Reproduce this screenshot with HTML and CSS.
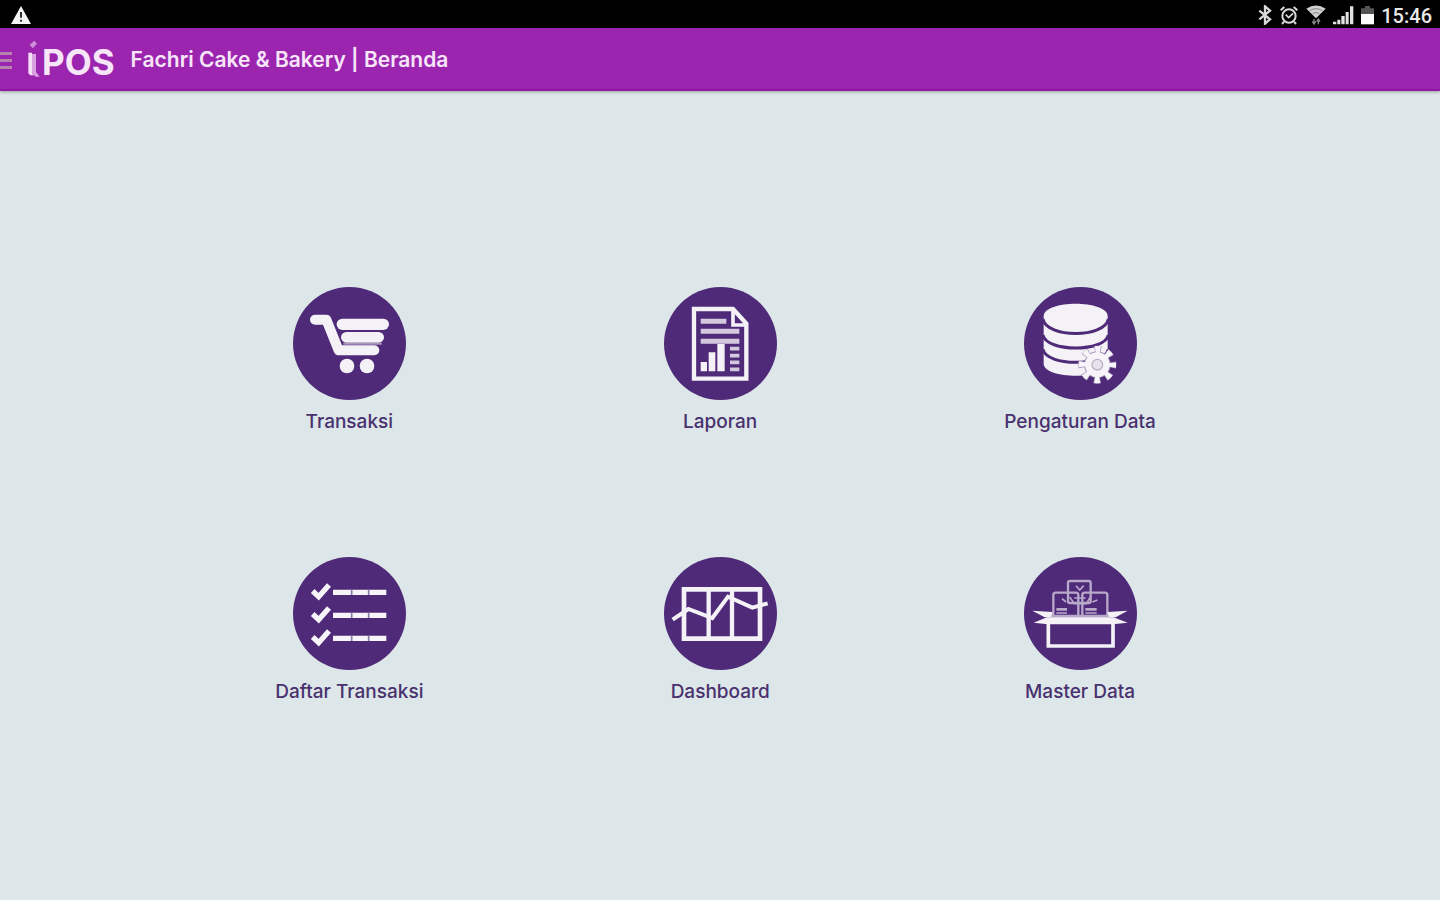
FILE: index.html
```html
<!DOCTYPE html>
<html lang="id">
<head>
    <meta charset="UTF-8">
    <meta name="viewport" content="width=device-width, initial-scale=1.0">
    <title>iPOS | Beranda</title>
    <link rel="stylesheet" href="styles.css">
</head>
<body>

    <div class="status-bar">
        <svg class="status-icon" width="20" height="18" viewBox="0 0 60 54">
            <path d="M30 0L60 54H0z" fill="#f4f4f4"/>
            <path d="M30 18v17M30 41v6" stroke="#333" stroke-width="6"/>
        </svg>
        <div class="status-right">
            <svg class="status-icon" width="14" height="20" viewBox="0 0 42 60">
                <path d="M4 17L36 43L21 56V4L36 17L4 43" fill="none" stroke="#d8d8d8" stroke-width="7"/>
            </svg>
            <svg class="status-icon" width="20" height="20" viewBox="0 0 60 60">
                <g fill="none" stroke="#d8d8d8" stroke-width="6">
                    <circle cx="30" cy="33" r="20"/>
                    <path d="M5 16L16 6M55 16L44 6M15 50l-6 7M45 50l6 7"/>
                    <path d="M20 29l9 9l13-13" stroke-width="5"/>
                </g>
            </svg>
            <svg class="status-icon" width="20" height="20" viewBox="0 0 60 60">
                <path d="M1 11Q30-8 59 11L30 40z" fill="#d0d0d0"/>
                <path d="M11 17Q30 5 49 17M20 26Q30 18 40 26" fill="none" stroke="#888" stroke-width="3"/>
                <path d="M24 42v15M19 49l5 8l5-8M37 58V43M32 50l5-8l5 8" fill="none" stroke="#8a8a8a" stroke-width="4"/>
            </svg>
            <svg class="status-icon" width="21" height="20" viewBox="0 0 63 60">
                <path d="M0 58v-8h10v8zM13 58V44h9v14zM25 58V33h10v25zM38 58V21h9v37zM51 58V4h10v54z" fill="#e2e2e2"/>
            </svg>
            <svg class="status-icon" width="13" height="20" viewBox="0 0 39 60">
                <path d="M12 3h15v7h12v18H0V10h12z" fill="#555"/>
                <path d="M0 27h39v31H0z" fill="#fff"/>
            </svg>
            <span class="clock">15:46</span>
        </div>
    </div>

    <header class="app-bar">
        <button class="menu-btn" aria-label="Menu"><span></span><span></span><span></span></button>
        <div class="logo">
            <svg class="logo-mark" width="14" height="40" viewBox="0 0 42 120">
                <path d="M8 14L22 2L30 11L17 25z" fill="#cf8ed9"/>
                <path d="M4 38h11v62l6 6H10l-6-6z" fill="#f3dff6"/>
                <path d="M15 42h12v54l11 14H26L15 100z" fill="#d9a3e1"/>
            </svg>
            <span class="logo-text">POS</span>
        </div>
        <h1 class="title">Fachri Cake &amp; Bakery | Beranda</h1>
    </header>

    <main class="menu">
        <a class="menu-item" href="#transaksi">
            <svg class="icon" viewBox="68 20 339 339">
                <circle class="disc" cx="237.5" cy="189.5" r="169.5"/>
                <g fill="none" stroke="#f4f1f7" stroke-linecap="round" stroke-linejoin="round">
                    <path d="M134 118H168L205 210H312" stroke-width="30"/>
                    <path d="M216 132H339" stroke-width="34"/>
                    <path d="M228 171H325" stroke-width="32"/>
                </g>
                <path d="M219 190H334" stroke="#aa98bd" stroke-width="6"/>
                <circle class="solid" cx="230" cy="257" r="22"/>
                <circle class="solid" cx="290" cy="257" r="22"/>
            </svg>
            <span class="label">Transaksi</span>
        </a>

        <a class="menu-item" href="#laporan">
            <svg class="icon" viewBox="73 20 339 339">
                <circle class="disc" cx="242.5" cy="189.5" r="169.5"/>
                <path class="line" d="M163 86H280L320 130V295H163z" stroke-width="13"/>
                <path class="line" d="M280 88V134H320" stroke-width="11"/>
                <g stroke="#d3c8de" stroke-width="15">
                    <path d="M183 123H260M183 153H299M183 183H299"/>
                    <path d="M271 205H299M271 226H299M271 246H299M271 267H299" stroke-width="11"/>
                </g>
                <path class="solid" d="M183 245h19v28h-19zM207 216h20v57h-20zM233 191h22v82h-22z"/>
            </svg>
            <span class="label">Laporan</span>
        </a>

        <a class="menu-item" href="#pengaturan">
            <svg class="icon" viewBox="73 20 339 339">
                <circle class="disc" cx="242.5" cy="189.5" r="169.5"/>
                <path class="solid" d="M132 108C132 58 324 58 324 108V250C324 298 132 298 132 250z"/>
                <g fill="none" stroke="#4e2a78" stroke-width="9">
                    <path d="M130 116C140 174 316 174 326 116"/>
                    <path d="M130 164C140 216 316 216 326 164"/>
                    <path d="M130 207C140 259 316 259 326 207"/>
                </g>
                <!-- gear: soft edge first, then the teeth and ring -->
                <g fill="none" stroke="#a596b9">
                    <circle cx="293" cy="253" r="45" stroke-width="24" stroke-dasharray="19 16.34" stroke-dashoffset="9.5"/>
                    <circle cx="293" cy="253" r="28" stroke-width="24"/>
                </g>
                <g fill="none" stroke="#f7f5f9">
                    <circle cx="293" cy="253" r="45" stroke-width="22" stroke-dasharray="15 20.34" stroke-dashoffset="7.5"/>
                    <circle cx="293" cy="253" r="26" stroke-width="22"/>
                </g>
                <circle cx="293" cy="253" r="16" fill="#e6e2ea" stroke="#b9b0c4" stroke-width="4"/>
            </svg>
            <span class="label">Pengaturan Data</span>
        </a>

        <a class="menu-item" href="#daftar-transaksi">
            <svg class="icon" viewBox="66 20 339 339">
                <circle class="disc" cx="235.5" cy="189.5" r="169.5"/>
                <g fill="none" stroke="#f7f5f9" stroke-width="16">
                    <path d="M125 122l18 17l31-35M125 191l18 17l31-35M125 260l18 17l31-35"/>
                    <path d="M186 126H346M186 195H346M186 264H346"/>
                </g>
                <path d="M242 118v16M242 187v16M242 256v16M293 118v16M293 187v16M293 256v16" stroke="#8d78a8" stroke-width="5"/>
            </svg>
            <span class="label">Daftar Transaksi</span>
        </a>

        <a class="menu-item" href="#dashboard">
            <svg class="icon" viewBox="73 20 339 339">
                <circle class="disc" cx="242.5" cy="189.5" r="169.5"/>
                <path class="line" d="M133 117H361V265H133z" stroke-width="14"/>
                <path class="line" d="M207 117V265M277 117V265" stroke-width="13"/>
                <path class="line" d="M99 208L146 176L218 203L265 139L338 172L384 159" stroke-width="12"/>
            </svg>
            <span class="label">Dashboard</span>
        </a>

        <a class="menu-item" href="#master-data">
            <svg class="icon" viewBox="73 20 339 339">
                <circle class="disc" cx="242.5" cy="189.5" r="169.5"/>
                <g fill="none" stroke="#b8a8ca" stroke-width="7">
                    <rect x="205" y="92" width="68" height="66" rx="6"/>
                    <path d="M161 196V134q0-7 7-7H229q7 0 7 7V196"/>
                    <path d="M248 196V134q0-7 7-7H316q7 0 7 7V196"/>
                    <path d="M229 106l11 13l12-13M187 145l12 10M278 155l15-6M210 140l14 20h36l12-20M224 143h34" stroke-width="5"/>
                    <path d="M170 177H202M257 177H291" stroke-width="8"/>
                    <path d="M170 188H202M257 188H291" stroke-width="4"/>
                </g>
                <path class="solid" d="M98 181L158 185V201H135zM384 181L324 185V201H348z"/>
                <path d="M155 198H327" stroke="#b8a8ca" stroke-width="9"/>
                <path class="solid" d="M142 201H341L384 217L340 222H144L102 217z"/>
                <path class="line" d="M146 212V287H340V212z" stroke-width="11"/>
            </svg>
            <span class="label">Master Data</span>
        </a>
    </main>

</body>
</html>
```

FILE: styles.css
```css
* {
    margin: 0;
    padding: 0;
    box-sizing: border-box;
}

body {
    min-height: 100vh;
    display: flex;
    flex-direction: column;
    background: #dde6e8;
    font-family: "Inter", "Open Sans", sans-serif;
}

/* system status bar */
.status-bar {
    height: 28px;
    padding: 2px 8px 0 11px;
    display: flex;
    align-items: center;
    justify-content: space-between;
    background: #000;
}

.status-icon {
    display: block;
    flex: none;
}

.status-right {
    display: flex;
    align-items: center;
    gap: 7px;
}

.clock {
    font-family: "Roboto", sans-serif;
    font-size: 20px;
    font-weight: 500;
    line-height: 26px;
    padding-top: 2px;
    color: #e8e8e8;
}

/* purple header */
.app-bar {
    height: 63px;
    padding-top: 3px;
    display: flex;
    align-items: center;
    background: #9c25b0;
    border-bottom: 2px solid #8e1a9f;
    box-shadow: 0 1px 3px rgba(0, 0, 0, 0.3);
    color: #f6e6f8;
}

.menu-btn {
    width: 12px;
    height: 40px;
    display: flex;
    flex-direction: column;
    justify-content: center;
    gap: 4px;
    border: none;
    background: none;
    cursor: pointer;
}

.menu-btn span {
    height: 3px;
    background: #b583ad;
}

.logo {
    display: flex;
    align-items: center;
    gap: 1px;
    margin-left: 15px;
}

.logo-text {
    font-size: 35px;
    font-weight: 700;
    line-height: 40px;
    padding-top: 4px;
}

.logo-mark {
    display: block;
}

.title {
    margin-left: 16px;
    font-size: 21px;
    font-weight: 600;
    line-height: 28px;
    white-space: nowrap;
}

/* home menu */
.menu {
    flex: 1;
    display: grid;
    grid-template-columns: 382fr 360fr 360fr;
    align-content: center;
    row-gap: 122px;
    padding: 1px 12.5% 0 11%;
}

.menu-item {
    display: flex;
    flex-direction: column;
    align-items: center;
    justify-self: center;
    gap: 9px;
    color: #49316f;
    text-decoration: none;
}

.icon {
    width: 113px;
    height: 113px;
    display: block;
}

.label {
    font-size: 19px;
    font-weight: 500;
    line-height: 26px;
    white-space: nowrap;
}

.disc {
    fill: #4e2a78;
}

.solid {
    fill: #f4f1f7;
}

.line {
    fill: none;
    stroke: #f4f1f7;
}
```
